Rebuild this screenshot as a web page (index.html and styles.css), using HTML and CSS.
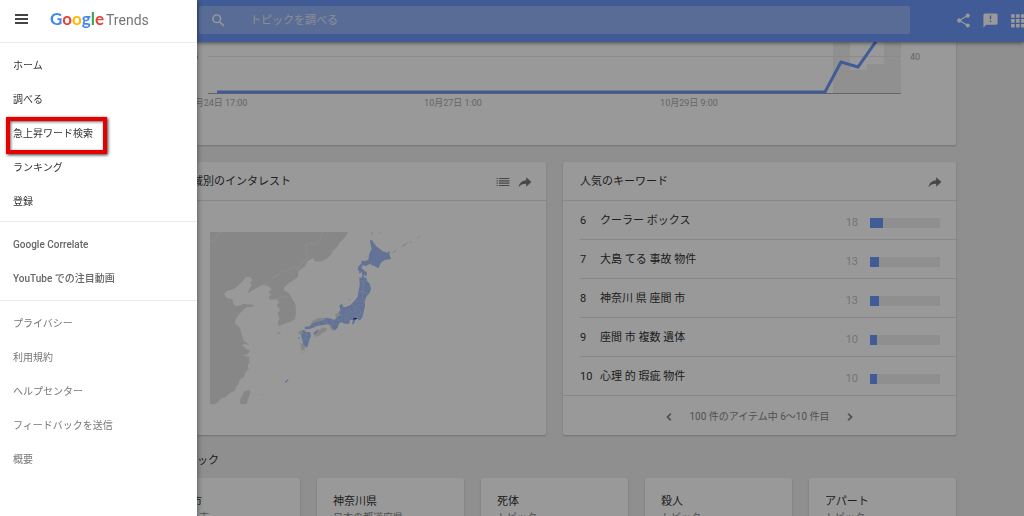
FILE: index.html
```html
<!DOCTYPE html>
<html lang="ja">
<head>
<meta charset="utf-8">
<meta name="viewport" content="width=device-width, initial-scale=1">
<title>Google Trends</title>
<link rel="stylesheet" href="styles.css">
</head>
<body>
<svg class="defs" aria-hidden="true">
  <symbol id="share-arrow" viewBox="0 0 24 24"><path d="M14 9V4l9 8-9 8v-5C8 15 4 17 1 21 2 15 6 9.500 14 9z"/></symbol>
</svg>
<div class="page">
  <header class="topbar">
    <form class="search" role="search">
      <svg class="search-icon" viewBox="0 0 24 24" aria-hidden="true"><path d="M15.500 14h-.79l-.28-.27A6.470 6.470 0 0 0 16 9.500 6.500 6.500 0 1 0 9.500 16c1.610 0 3.090-.59 4.230-1.570l.27.28v.79l5 4.990L20.490 19l-4.990-5zm-6 0C7.010 14 5 11.990 5 9.500S7.010 5 9.500 5 14 7.010 14 9.500 11.990 14 9.500 14z"/></svg>
      <input class="search-input" type="text" aria-label="トピックを調べる" placeholder="トピックを調べる">
    </form>
    <div class="actions">
      <button class="icon-button" type="button" aria-label="共有"><svg viewBox="0 0 24 24"><path d="M18 16.080c-.76 0-1.440.3-1.960.77L8.910 12.700c.05-.23.09-.46.09-.7s-.04-.47-.09-.7l7.050-4.110A3 3 0 1 0 15 5c0 .24.040.47.090.7L8.040 9.810a3 3 0 1 0 0 4.380l7.120 4.160c-.05.21-.08.43-.08.65A2.920 2.920 0 1 0 18 16.080z"/></svg></button>
      <button class="icon-button" type="button" aria-label="フィードバックを送信"><svg viewBox="0 0 24 24"><path d="M20 2H4a2 2 0 0 0-2 2v18l4-4h14a2 2 0 0 0 2-2V4a2 2 0 0 0-2-2zm-7 12h-2v-2h2zm0-4h-2V5h2z"/></svg></button>
      <button class="icon-button" type="button" aria-label="アプリ"><svg viewBox="0 0 24 24"><path d="M3 3h5v5H3zm7 0h5v5h-5zm7 0h5v5h-5zM3 10h5v5H3zm7 0h5v5h-5zm7 0h5v5h-5zM3 17h5v5H3zm7 0h5v5h-5zm7 0h5v5h-5z"/></svg></button>
    </div>
  </header>

  <main class="content">
    <section class="card chart-card" aria-label="人気度の動向">
      <svg class="chart" viewBox="0 0 803 103">
        <path class="forecast" d="M680 0h17v28h17v-6h17V0h17v51h-68z"/>
        <path class="gridline" d="M55 14.500h693"/>
        <path class="baseline" d="M55 51.500h693"/>
        <path class="trend" d="M64 50h608l16-30 17 5 19-27"/>
        <text class="average" x="40" y="18">5</text>
        <text class="axis" x="757" y="18">40</text>
        <text class="axis middle" x="63" y="64">10月24日 17:00</text>
        <text class="axis middle" x="300" y="64">10月27日 1:00</text>
        <text class="axis middle" x="536" y="64">10月29日 9:00</text>
      </svg>
    </section>

    <div class="panels">
      <section class="card">
        <div class="card-head">
          <h2 class="card-title">小区域別のインタレスト</h2>
          <button class="tool" type="button" aria-label="リスト表示"><svg viewBox="0 0 24 24"><path d="M1 5h2v2H1zm4 0h18v2H5zM1 9h2v2H1zm4 0h18v2H5zm-4 4h2v2H1zm4 0h18v2H5zm-4 4h2v2H1zm4 0h18v2H5z"/></svg></button>
          <button class="tool" type="button" aria-label="共有"><svg><use href="#share-arrow"/></svg></button>
        </div>
        <div class="map-area">
          <svg class="map" viewBox="30 20 837 519" role="img" aria-label="日本の地図">
            <path class="land" d="M30 20H444L434 38 420 50 412 64 398 78 390 92 376 103 360 109 345 108 338 98 322 108 314 124 296 136 293 156 272 170 253 184 251 194 266 203 274 216 287 239 288 264 285 282 268 291 250 296 236 303 233 292 238 279 233 264 240 254 230 240 237 233 232 222 210 223 205 216 213 207 204 202 215 192 205 182 188 179 170 188 151 199 144 204 147 192 155 180 150 172 158 163 150 155 137 156 128 168 112 183 100 192 80 198 73 207 80 218 97 222 101 239 112 243 130 236 160 238 160 244 139 246 120 264 110 276 104 293 120 307 124 322 130 344 148 359 134 356 125 359 140 371 151 377 140 388 124 389 150 395 146 404 150 409 143 420 146 432 136 441 132 456 120 462 115 478 108 484 105 496 90 503 78 514 61 522 54 530 45 537H30zM150 493 151 503 139 537H120L121 521 134 498z"/>
            <path class="land" d="M230 324l10-4 3 3-9 4zM512 20h6l-1 12zM538 20h4v5zM573 85l10-9 9-4-6 8zM602 66l17-14 6-1-12 12zM628 50l8-4-5 7zM650 40l13-13-9 13zM292 323l10-8 8 4-8 9zM277 337l3-2v3zM303 372l5 10-2 6zM285 430l6-3-4 5zM182 508l8-2-4 4z"/>
            <path class="border" d="M30 48l14-5 12-17 8-6M368 20l-11 27-8 10-17-3-14 4 2 15 2 28-14 6-9 18-10 5-7-6-22 14-7-5-11 7-11 13-16 6-18 18-6-3M228 222l18-7 23 1"/>
            <path class="japan" d="M510 44l6 1 12 17 18 14 15 6 9-5-2 9 5 15-20 4-10 7-8 17-14-8-12-5-12 7-7-4-6 9 11 8-3 6-8-2-5 6-2-10-4-4 3-10 8-7 1-10 9 3 11-5 3-18 7-14-4-18z"/>
            <g transform="translate(285 9)">
              <path class="land" d="M45 290l8-13 16-8 20-1 10 4-5 12-40 10zM58 318l7-13 11-2 8-6 13 3-4 9-12 6-8 7-13 3zM100 288l25 0 5 8-11 11-10-2zM120 258l10-6 6 12-12 8zM16 343l10 5 8 9-6 4 2 7-12-5z"/>
              <path class="japan" d="M193 147l7 2 2-10 3-1 1 8 7 3 4 10 7 7 4 14-3 12-11 13-5 15 1 12-4 19-3 12-4 9-9 5-2-10-6 7-7 15-4-4 3-9-8-2-4 13-12-1-10-4-7 3-6 14-8 6-7-5-5-11-12-1-14 3-14 1-13 6-12 4-12 1-1-7 16-3 8-8 14-5 19-4 8-8 15 3 10 4 7-8 9-6-4-8 5-10-3-12 9-4 2 8 7 2 16-7 13-14 8-10 2-15 4-20zM200 131l14-2 2 10-4 5-5-5-4 3z"/>
              <path class="japan" d="M20 306l9 0 4 6 12-1 3 13-6 13-4 18-4 1-9-8-4-15-3-15 5-5zM56 314l10-9 3 1-5 8-7 6zM161 211l4 2-2 4zM9 328l5-2 0 8zM-31 462l12-12-3 8-6 6z"/>
              <path class="prefecture" d="M194 157l11 2 12-1M206 158l-1 29 3 7 9 1M191 192l13-5M203 190l-1 24 7 4M182 217l15 2 12 5M171 230l11 6 9-7 16 3M162 237l3 14 10 1 6-15M182 252l5-15M180 253l7 8 11-6-6-15M152 240l2 15-5 9 4 14M140 242l-5 12 7 9-6 13M131 260h12M163 252l-4 14 1 13M165 266l10-5 9 3 4 9M126 268l4 12 9 2M113 272l-1 12 8 8M97 270l-2 20M87 276l2 13M73 280l-2 12M57 288l1 9M42 295l3 6M22 318l12 1 12 4M33 312l-2 21M22 334l16 0"/>
              <path class="focus" d="M175 270l9-2 3 4-12 2z"/>
            </g>
          </svg>
        </div>
      </section>

      <section class="card">
        <div class="card-head">
          <h2 class="card-title">人気のキーワード</h2>
          <button class="tool" type="button" aria-label="共有"><svg><use href="#share-arrow"/></svg></button>
        </div>
        <ol class="keywords" start="6">
          <li class="keyword"><span class="rank">6</span><span class="term">クーラー ボックス</span><span class="score">18</span><span class="bar"><span class="fill" style="width:18%"></span></span></li>
          <li class="keyword"><span class="rank">7</span><span class="term">大島 てる 事故 物件</span><span class="score">13</span><span class="bar"><span class="fill" style="width:13%"></span></span></li>
          <li class="keyword"><span class="rank">8</span><span class="term">神奈川 県 座間 市</span><span class="score">13</span><span class="bar"><span class="fill" style="width:13%"></span></span></li>
          <li class="keyword"><span class="rank">9</span><span class="term">座間 市 複数 遺体</span><span class="score">10</span><span class="bar"><span class="fill" style="width:10%"></span></span></li>
          <li class="keyword"><span class="rank">10</span><span class="term">心理 的 瑕疵 物件</span><span class="score">10</span><span class="bar"><span class="fill" style="width:10%"></span></span></li>
        </ol>
        <div class="pager">
          <button class="tool" type="button" aria-label="前へ"><svg viewBox="0 0 24 24"><path d="M15.400 7.400 14 6l-6 6 6 6 1.400-1.400-4.600-4.600z" stroke="currentColor"/></svg></button>
          <span>100 件のアイテム中 6～10 件目</span>
          <button class="tool" type="button" aria-label="次へ"><svg viewBox="0 0 24 24"><path d="M10 6 8.600 7.400l4.600 4.600-4.600 4.600L10 18l6-6z" stroke="currentColor"/></svg></button>
        </div>
      </section>
    </div>

    <h2 class="section-title">関連トピック</h2>
    <div class="topics">
      <article class="card topic"><h3 class="topic-name">座間市</h3><p class="topic-kind">日本の市</p></article>
      <article class="card topic"><h3 class="topic-name">神奈川県</h3><p class="topic-kind">日本の都道府県</p></article>
      <article class="card topic"><h3 class="topic-name">死体</h3><p class="topic-kind">トピック</p></article>
      <article class="card topic"><h3 class="topic-name">殺人</h3><p class="topic-kind">トピック</p></article>
      <article class="card topic"><h3 class="topic-name">アパート</h3><p class="topic-kind">トピック</p></article>
    </div>
  </main>
</div>

<div class="scrim"></div>

<nav class="drawer" aria-label="メインメニュー">
  <div class="drawer-head">
    <button class="menu-button" type="button" aria-label="メニュー"><svg viewBox="0 0 13 10"><path d="M0 0h13v2H0zm0 4h13v2H0zm0 4h13v2H0z"/></svg></button>
    <a class="logo" href="#"><span class="google"><span class="blue">G</span><span class="red">o</span><span class="yellow">o</span><span class="blue">g</span><span class="green">l</span><span class="red">e</span></span><span class="trends">Trends</span></a>
  </div>
  <ul class="menu">
    <li><a href="#">ホーム</a></li>
    <li><a href="#">調べる</a></li>
    <li class="highlight"><a href="#">急上昇ワード検索</a></li>
    <li><a href="#">ランキング</a></li>
    <li><a href="#">登録</a></li>
  </ul>
  <ul class="menu external">
    <li><a href="#">Google Correlate</a></li>
    <li><a href="#">YouTube での注目動画</a></li>
  </ul>
  <ul class="menu muted">
    <li><a href="#">プライバシー</a></li>
    <li><a href="#">利用規約</a></li>
    <li><a href="#">ヘルプセンター</a></li>
    <li><a href="#">フィードバックを送信</a></li>
    <li><a href="#">概要</a></li>
  </ul>
</nav>
</body>
</html>
```
FILE: styles.css
```css
* { box-sizing: border-box; }

body {
  margin: 0;
  background: #eee;
  color: #333;
  font: 11px/16px Roboto, "Noto Sans CJK JP", sans-serif;
  overflow: hidden;
}

h2, h3, p, ul, ol { margin: 0; padding: 0; font-size: inherit; font-weight: 400; }
ul, ol { list-style: none; }
a { color: inherit; text-decoration: none; }
button { margin: 0; padding: 0; border: 0; background: none; color: inherit; cursor: pointer; }
svg { display: block; fill: currentColor; }
.defs { position: absolute; width: 0; height: 0; }

.page { height: 100vh; overflow: hidden; }

/* Top bar */
.topbar {
  position: relative;
  display: flex;
  align-items: center;
  height: 42px;
  padding: 0 0 2px 199px;
  background: #6b98f8;
  box-shadow: 0 1px 4px rgba(0, 0, 0, .5);
  color: #fff;
}
.search {
  flex: 1;
  display: flex;
  align-items: center;
  gap: 23px;
  height: 28px;
  padding-left: 11px;
  border-radius: 2px;
  background: rgba(255, 255, 255, .28);
}
.search-icon { width: 17px; height: 17px; }
.search-input {
  flex: 1;
  padding: 1px 0 0;
  border: 0;
  outline: 0;
  background: none;
  color: #fff;
  font: inherit;
}
.search-input::placeholder { color: #e8ecf6; opacity: 1; }
.actions { display: flex; gap: 10px; width: 114px; padding-left: 45px; overflow: hidden; }
.icon-button { flex: none; }
.icon-button svg { width: 17px; height: 17px; }

/* Content */
.content { padding: 0 68px 0 153px; }
.card { border-radius: 2px; background: #fff; box-shadow: 0 1px 2px rgba(0, 0, 0, .2); }

.chart { width: 100%; height: auto; }
.forecast { fill: #f0f0f0; }
.gridline { stroke: #e8e8e8; }
.baseline { stroke: #aaa; }
.trend { fill: none; stroke: #6b98f8; stroke-width: 3; }
.axis { fill: #aaa; font-size: 9px; }
.middle { text-anchor: middle; }
.average { fill: #6b98f8; font-size: 9px; }

.panels { display: grid; grid-template-columns: 1fr 1fr; gap: 17px; margin-top: 17px; }
.card-head {
  display: flex;
  align-items: center;
  gap: 8px;
  height: 39px;
  padding: 1px 14px 0 17px;
  border-bottom: 1px solid #e2e2e2;
}
.card-title { flex: 1; }
.tool { color: #777; }
.tool svg { width: 14px; height: 14px; }

.map-area { display: flex; justify-content: center; padding: 31px 57px 30px; }
.map { width: 100%; height: auto; }
.land { fill: #e2e2e2; }
.japan { fill: #a5c0fa; }
.border { fill: none; stroke: #f2f2f2; stroke-width: 2; }
.prefecture { fill: none; stroke: #c6d6fa; stroke-width: 2; }
.focus { fill: #283593; }

.keyword {
  display: flex;
  align-items: center;
  height: 39px;
  margin-left: 17px;
  padding: 2px 16px 0 0;
  border-bottom: 1px solid #e2e2e2;
}
.keyword:last-child { margin-left: 0; padding-left: 17px; }
.rank { width: 20px; }
.term { flex: 1; }
.score { margin-top: 3px; color: #c4c4c4; }
.bar { width: 70px; height: 10px; margin: 3px 0 0 12px; background: #eee; }
.fill { display: block; height: 100%; background: #6b98f8; }
.pager {
  display: flex;
  align-items: center;
  justify-content: center;
  gap: 13px;
  height: 39px;
  padding-top: 3px;
  color: #888;
  font-size: 10px;
}

.section-title { margin: 18px 0 9px; }
.topics { display: grid; grid-template-columns: repeat(5, 1fr); gap: 17px; }
.topic { height: 100px; padding: 16px; }
.topic-kind { color: #888; font-size: 10px; }

/* Drawer */
.scrim { position: fixed; inset: 0; background: rgba(0, 0, 0, .4); }
.drawer {
  position: fixed;
  inset: 0 auto 0 0;
  width: 197px;
  background: #fff;
  box-shadow: 0 0 6px rgba(0, 0, 0, .5);
  font-size: 10px;
}
.drawer-head {
  display: flex;
  align-items: center;
  gap: 22px;
  height: 43px;
  padding: 0 15px 4px;
  border-bottom: 1px solid #ebebeb;
}
.menu-button { color: #444; }
.menu-button svg { width: 13px; height: 10px; }
.logo { display: flex; align-items: baseline; gap: 2px; line-height: 20px; }
.google { font-family: Lato, sans-serif; font-size: 17px; font-weight: 700; }
.trends { color: #757575; font-size: 14px; }
.blue { color: #4285f4; }
.red { color: #ea4335; }
.yellow { color: #fbbc05; }
.green { color: #34a853; }

.menu { padding: 6px 0 2px; border-bottom: 1px solid #ebebeb; color: #333; }
.menu:last-child { border-bottom: 0; }
.menu a { display: block; padding: 9px 13px; line-height: 16px; }
.external { padding-bottom: 4px; color: #666; font-weight: 500; }
.muted { color: #777; }
.highlight { position: relative; }
.highlight::after {
  content: "";
  position: absolute;
  inset: 0 90px -3px 6px;
  border: 4px solid #e60000;
  box-shadow: 1px 1px 3px rgba(0, 0, 0, .8), inset 1px 1px 3px rgba(0, 0, 0, .6);
  pointer-events: none;
}
```
